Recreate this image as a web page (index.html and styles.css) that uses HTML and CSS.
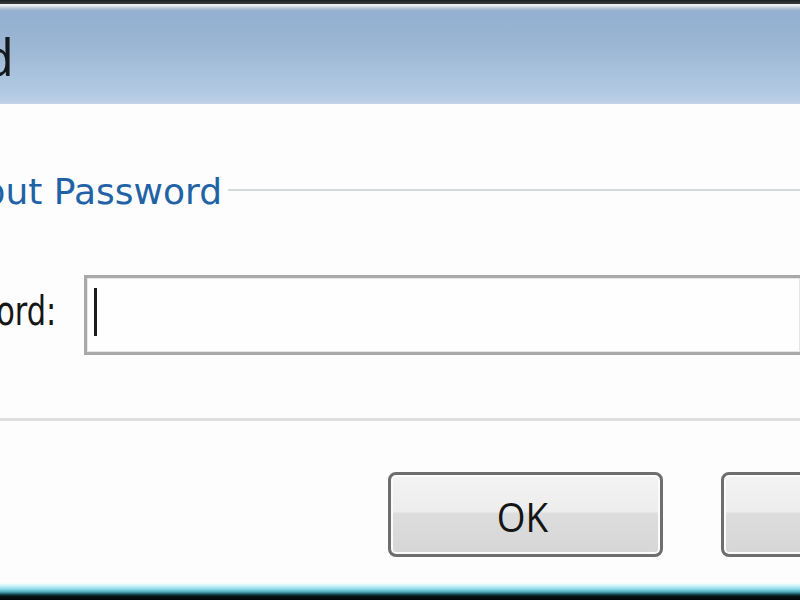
FILE: index.html
```html
<!DOCTYPE html>
<html lang="en">
<head>
<meta charset="utf-8">
<title>Password</title>
<link rel="stylesheet" href="styles.css">
</head>
<body>
  <div class="top-edge"></div>
  <div class="titlebar">
    <div class="clip title-clip"><span class="title-text">Password</span></div>
  </div>
  <div class="content">
    <div class="group">
      <div class="legend-row">
        <div class="clip legend-clip"><span class="legend-text">Input Password</span></div>
        <div class="legend-line"></div>
      </div>
      <div class="field-row">
        <div class="clip label-clip"><span class="label-text">Password:</span></div>
        <div class="input"><span class="caret"></span></div>
      </div>
    </div>
    <div class="buttons">
      <div class="btn"><span class="btn-label">OK</span></div>
      <div class="btn btn-wide"><span class="btn-label">Cancel</span></div>
    </div>
  </div>
  <div class="bottom-edge"></div>
</body>
</html>
```
FILE: styles.css
```css
html, body {
  margin: 0;
  padding: 0;
}
body {
  width: 800px;
  height: 600px;
  overflow: hidden;
  background: #fdfdfd;
  display: flex;
  flex-direction: column;
  font-family: "DejaVu Sans", "Liberation Sans", sans-serif;
}
.top-edge {
  height: 4px;
  background: linear-gradient(#1c1f22, #3a3d40);
  flex: none;
}
.titlebar {
  flex: none;
  height: 100px;
  box-sizing: border-box;
  padding-top: 26px;
  background: linear-gradient(#eef2f6 0px, #e2e8ee 2px, #b9c7d6 4px, #94afd0 7px, #9ab6d3 40px, #b3cae3 90px, #bccfe6 98px, #c7d5e8 100px);
}
.clip {
  display: flex;
  justify-content: flex-end;
  overflow: hidden;
  white-space: nowrap;
  flex: none;
}
.title-clip {
  width: 14px;
}
.title-text {
  font-family: "Open Sans", "Liberation Sans", sans-serif;
  font-size: 52px;
  line-height: 52px;
  color: #15191e;
}
.content {
  flex: none;
  padding-top: 66px;
}
.legend-row {
  display: flex;
  align-items: flex-start;
  height: 44px;
}
.legend-clip {
  width: 222px;
}
.legend-text {
  font-size: 36px;
  line-height: 44px;
  color: #1f63a6;
}
.legend-line {
  flex: 1;
  height: 2px;
  margin-top: 19px;
  margin-left: 6px;
  background: #d4d9dc;
}
.field-row {
  display: flex;
  align-items: center;
  margin-top: 61px;
  height: 80px;
}
.label-clip {
  width: 56px;
  margin-right: 28px;
  margin-top: -8px;
}
.label-text {
  font-size: 40px;
  line-height: 48px;
  color: #161616;
  display: inline-block;
  transform: scaleX(0.76);
  transform-origin: right center;
}
.input {
  flex: 1;
  height: 80px;
  box-sizing: border-box;
  border: 3px solid #a9a9a9;
  border-right: none;
  background: #fefefe;
  box-shadow: inset 0 0 0 1px #e6e6e6;
  padding: 10px 0 0 7px;
}
.caret {
  display: block;
  width: 3px;
  height: 48px;
  background: #1b1b1b;
}
.group {
  border-bottom: 3px solid #dedede;
  padding-bottom: 63px;
}
.buttons {
  display: flex;
  gap: 58px;
  padding-left: 388px;
  margin-top: 51px;
}
.btn {
  flex: none;
  width: 275px;
  height: 85px;
  box-sizing: border-box;
  border: 3px solid #6e6e6e;
  border-radius: 8px;
  background: linear-gradient(#f3f3f3 0%, #ededed 46%, #dddddd 49%, #d6d6d6 100%);
  box-shadow: inset 0 0 0 2px #fbfbfb;
  display: flex;
  align-items: center;
  justify-content: center;
}
.btn-wide {
  width: 320px;
}
.btn-label {
  font-family: "Open Sans", "Liberation Sans", sans-serif;
  font-size: 41px;
  color: #151515;
  margin-top: 2px;
  margin-right: 6px;
  display: inline-block;
  transform: scaleX(0.9);
}
.bottom-edge {
  margin-top: auto;
  flex: none;
  height: 17px;
  background: linear-gradient(#fbffff 0px, #c6f3fa 3px, #8fdbe8 6px, #4da7b8 9px, #1c5662 11px, #061418 13px, #020405 17px);
}
```
